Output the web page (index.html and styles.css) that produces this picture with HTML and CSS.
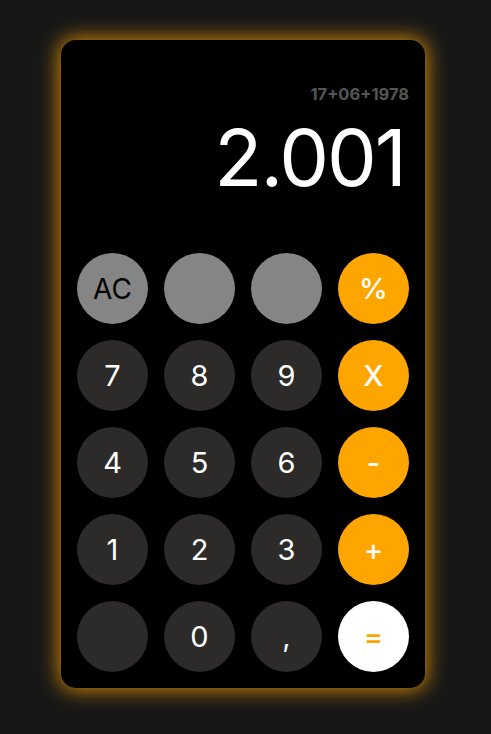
FILE: index.html
```html
<!DOCTYPE html>
<html>
<head>
<meta charset="utf-8">
<link rel="stylesheet" href="styles.css">
</head>
<body>
<div class="calc">
  <div class="display">
    <div class="history">17+06+1978</div>
    <div class="result">2.001</div>
  </div>
  <div class="keys">
    <button class="key grey">AC</button>
    <button class="key grey"></button>
    <button class="key grey"></button>
    <button class="key orange">%</button>
    <button class="key dark">7</button>
    <button class="key dark">8</button>
    <button class="key dark">9</button>
    <button class="key orange">X</button>
    <button class="key dark">4</button>
    <button class="key dark">5</button>
    <button class="key dark">6</button>
    <button class="key orange">-</button>
    <button class="key dark">1</button>
    <button class="key dark">2</button>
    <button class="key dark">3</button>
    <button class="key orange">+</button>
    <button class="key dark"></button>
    <button class="key dark">0</button>
    <button class="key dark">,</button>
    <button class="key white">=</button>
  </div>
</div>
</body>
</html>
```
FILE: styles.css
```css
html, body {
  margin: 0;
  padding: 0;
  background: #171717;
  font-family: Inter, "Noto Sans", sans-serif;
}
body {
  padding: 40px 0 0 61px;
  height: 734px;
  box-sizing: border-box;
}
.calc {
  width: 364px;
  height: 648px;
  box-sizing: border-box;
  background: #000;
  border-radius: 15px;
  box-shadow: 0 0 20px 2px rgba(255, 165, 0, 0.8);
  padding: 0 16px 16px 16px;
  display: flex;
  flex-direction: column;
}
.display {
  height: 213px;
  display: flex;
  flex-direction: column;
  align-items: flex-end;
  padding-top: 44px;
  box-sizing: border-box;
}
.history {
  font-size: 16.5px;
  font-weight: 700;
  color: #555;
  line-height: 20px;
}
.result {
  font-size: 79px;
  color: #fff;
  line-height: 90px;
  margin-top: 8px;
  margin-right: 4px;
  letter-spacing: -2px;
}
.keys {
  display: grid;
  grid-template-columns: repeat(4, 71px);
  grid-auto-rows: 71px;
  column-gap: 16px;
  row-gap: 16px;
}
.key {
  border: none;
  border-radius: 50%;
  width: 71px;
  height: 71px;
  padding: 0;
  font-family: Inter, "Noto Sans", sans-serif;
  font-size: 29px;
  color: #fff;
}
.grey { background: #858585; color: #000; font-size: 28px; }
.dark { background: #2c2b29; }
.orange { background: #ffa500; font-weight: 500; }
.white { background: #fff; color: #ffa500; font-weight: 500; }
```
